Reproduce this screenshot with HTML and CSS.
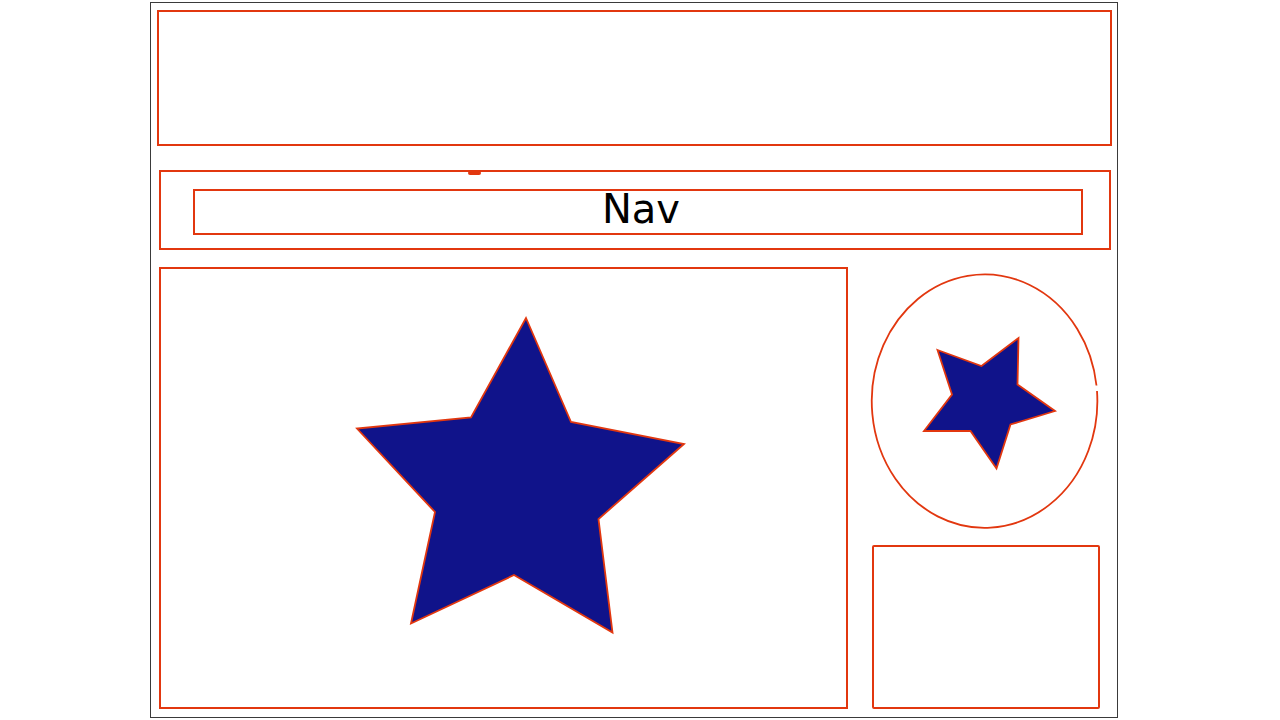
FILE: index.html
```html
<!DOCTYPE html>
<html>
<head>
<meta charset="utf-8">
<link rel="stylesheet" href="styles.css">
</head>
<body>
<div class="frame">
  <div class="header"></div>
  <div class="nav">
    <span class="blip"></span>
    <div class="nav-inner">Nav</div>
  </div>
  <div class="row">
    <div class="main">
      <svg class="main-art" viewBox="161 269 685 438" preserveAspectRatio="none">
        <polygon class="star" points="526,318 571,422 684,444 598.5,519 612.5,632.5 514,575 411,623.5 435,512 357,428.5 471,417.5"/>
      </svg>
    </div>
    <div class="side">
      <svg class="side-art" viewBox="872 267 228 278">
        <path class="ring" d="M 1097 391 A 112.8 126.7 0 1 1 1096.5 385.5"/>
        <polygon class="star" points="937.5,350 981.5,366 1018.5,338 1017.5,384.5 1055,411 1010.5,424.5 996.5,468.5 970.5,431 924,431 952,394.5"/>
      </svg>
      <div class="box"></div>
    </div>
  </div>
</div>
</body>
</html>
```

FILE: styles.css
```css
html, body {
  margin: 0;
  padding: 0;
  background: #ffffff;
}

body {
  font-family: "DejaVu Sans", "Liberation Sans", sans-serif;
}

.frame {
  box-sizing: border-box;
  width: 968px;
  height: 716px;
  margin: 2px 0 0 150px;
  border: 1px solid #3a3a3a;
  display: flex;
  flex-direction: column;
}

.header {
  box-sizing: border-box;
  width: 955px;
  height: 136px;
  margin: 7px 0 0 6px;
  border: 2px solid #e2370f;
}

.nav {
  position: relative;
  box-sizing: border-box;
  width: 952px;
  height: 80px;
  margin: 24px 0 0 8px;
  padding: 17px 0 0 32px;
  border: 2px solid #e2370f;
}

.blip {
  position: absolute;
  left: 307px;
  top: -1px;
  width: 13px;
  height: 4px;
  border-radius: 2px;
  background: #e2370f;
}

.nav-inner {
  box-sizing: border-box;
  width: 890px;
  height: 46px;
  padding-left: 6px;
  border: 2px solid #e2370f;
  font-size: 40px;
  line-height: 36px;
  text-align: center;
  color: #000000;
}

.row {
  display: flex;
  gap: 24px;
  margin: 17px 0 0 8px;
}

.main {
  box-sizing: border-box;
  width: 689px;
  height: 442px;
  border: 2px solid #e2370f;
}

.main-art {
  display: block;
  width: 685px;
  height: 438px;
}

.side {
  display: flex;
  flex-direction: column;
  width: 228px;
}

.side-art {
  display: block;
  width: 228px;
  height: 278px;
  overflow: visible;
}

.box {
  box-sizing: border-box;
  width: 228px;
  height: 164px;
  border: 2px solid #e2370f;
  border-radius: 2px;
}

.star {
  fill: #10138a;
  stroke: #e2370f;
  stroke-width: 1.8;
  stroke-linejoin: miter;
}

.ring {
  fill: none;
  stroke: #e2370f;
  stroke-width: 1.8;
}
```
